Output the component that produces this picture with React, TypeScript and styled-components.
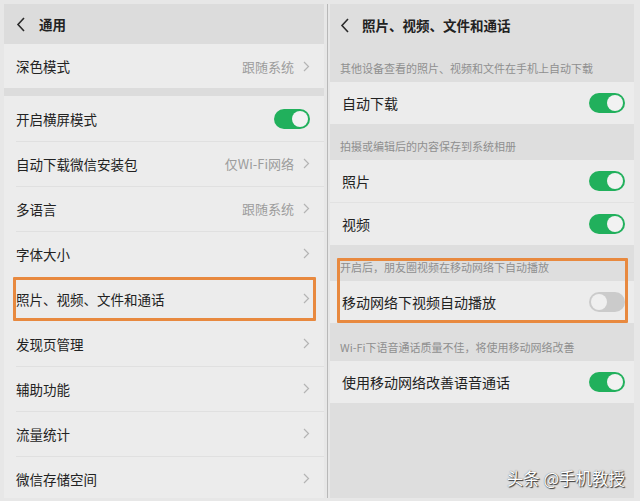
import styled, { createGlobalStyle } from 'styled-components';

const GlobalStyle = createGlobalStyle`
  html, body { margin: 0; padding: 0; }
  body {
    background: #e7e7e7;
    font-family: "Noto Sans CJK SC", "Noto Sans", sans-serif;
    color: #1f1f1f;
  }
`;

type LeftRow = { label: string; value?: string; toggle?: boolean; highlight?: boolean };

const leftRows: LeftRow[] = [
  { label: '开启横屏模式', toggle: true },
  { label: '自动下载微信安装包', value: '仅Wi-Fi网络' },
  { label: '多语言', value: '跟随系统' },
  { label: '字体大小' },
  { label: '照片、视频、文件和通话', highlight: true },
  { label: '发现页管理' },
  { label: '辅助功能' },
  { label: '流量统计' },
  { label: '微信存储空间' },
];

type Section = { note: string; tall?: boolean; highlight?: boolean; rows: { label: string; on: boolean }[] };

const sections: Section[] = [
  { note: '其他设备查看的照片、视频和文件在手机上自动下载', rows: [{ label: '自动下载', on: true }] },
  {
    note: '拍摄或编辑后的内容保存到系统相册',
    rows: [
      { label: '照片', on: true },
      { label: '视频', on: true },
    ],
  },
  { note: '开启后，朋友圈视频在移动网络下自动播放', highlight: true, rows: [{ label: '移动网络下视频自动播放', on: false }] },
  { note: 'Wi-Fi下语音通话质量不佳，将使用移动网络改善', tall: true, rows: [{ label: '使用移动网络改善语音通话', on: true }] },
];

const BackIcon = () => (
  <svg width="10" height="15" viewBox="0 0 10 15">
    <polyline points="8,1 2,7.5 8,14" fill="none" stroke="#2a2a2a" strokeWidth="1.6" />
  </svg>
);

const Chevron = () => (
  <svg width="7" height="11" viewBox="0 0 7 11">
    <polyline points="1,1 5.5,5.5 1,10" fill="none" stroke="#b4b4b4" strokeWidth="1.2" />
  </svg>
);

const Switch = ({ on }: { on: boolean }) => (
  <Styled.Track $on={on}>
    <Styled.Knob $on={on} />
  </Styled.Track>
);

export default function App() {
  return (
    <Styled.Page>
      <GlobalStyle />
      <Styled.LeftPanel>
        <Styled.Header>
          <BackIcon />
          <Styled.Title>通用</Styled.Title>
        </Styled.Header>
        <Styled.LeftRow $h={44}>
          <Styled.LeftLabel>深色模式</Styled.LeftLabel>
          <Styled.Value>跟随系统</Styled.Value>
          <Chevron />
        </Styled.LeftRow>
        <Styled.Gap />
        {leftRows.map(row => (
          <Styled.LeftRow key={row.label} $h={45} $line $highlight={row.highlight}>
            <Styled.LeftLabel>{row.label}</Styled.LeftLabel>
            {row.toggle ? (
              <Switch on />
            ) : (
              <>
                {row.value && <Styled.Value>{row.value}</Styled.Value>}
                <Chevron />
              </>
            )}
          </Styled.LeftRow>
        ))}
      </Styled.LeftPanel>
      <Styled.Seam />
      <Styled.RightPanel>
        <Styled.RightHeader>
          <BackIcon />
          <Styled.Title>照片、视频、文件和通话</Styled.Title>
        </Styled.RightHeader>
        {sections.map(sec => (
          <Styled.Group key={sec.note} $highlight={sec.highlight}>
            <Styled.Note $tall={sec.tall}>{sec.note}</Styled.Note>
            {sec.rows.map((row, j) => (
              <Styled.RightRow key={row.label} $line={j > 0}>
                <Styled.RightLabel>{row.label}</Styled.RightLabel>
                <Switch on={row.on} />
              </Styled.RightRow>
            ))}
          </Styled.Group>
        ))}
        <Styled.Watermark>头条 @手机教授</Styled.Watermark>
      </Styled.RightPanel>
    </Styled.Page>
  );
}

const Styled = {
  Page: styled.div`
    display: flex;
    height: 501px;
    box-sizing: border-box;
    padding: 4px 6px 3px 4px;
    overflow: hidden;
  `,
  LeftPanel: styled.div`
    width: 320px;
    flex: none;
    background: #dcdcdc;
    display: flex;
    flex-direction: column;
    overflow: hidden;
  `,
  Seam: styled.div`
    width: 1px;
    flex: none;
    margin: 0 2px 0 3px;
    background: #b8b8b8;
  `,
  RightPanel: styled.div`
    flex: 1;
    position: relative;
    background: #dedede;
    display: flex;
    flex-direction: column;
    overflow: hidden;
  `,
  Header: styled.div`
    height: 40px;
    flex: none;
    display: flex;
    align-items: center;
    padding-left: 12px;
    gap: 13px;
  `,
  RightHeader: styled.div`
    height: 42px;
    flex: none;
    display: flex;
    align-items: center;
    padding: 0 0 0 10px;
    box-sizing: border-box;
    gap: 12px;
  `,
  Title: styled.div`
    font-size: 13.5px;
    font-weight: 600;
    color: #222;
  `,
  Gap: styled.div`
    height: 8px;
    flex: none;
  `,
  LeftRow: styled.div<{ $h: number; $line?: boolean; $highlight?: boolean }>`
    position: relative;
    height: ${p => p.$h}px;
    flex: none;
    display: flex;
    align-items: center;
    padding: 0 14px 0 12px;
    background: #ececec;
    ${p =>
      p.$line &&
      `& + &::before {
        content: '';
        position: absolute;
        top: 0;
        left: 12px;
        right: 0;
        height: 1px;
        background: #e0e0e0;
      }`}
    ${p =>
      p.$highlight &&
      `&::after {
        content: '';
        position: absolute;
        top: 1px;
        bottom: 0;
        left: 9px;
        right: 8px;
        border: 3px solid #e8893f;
        border-radius: 1px;
      }`}
  `,
  LeftLabel: styled.div`
    flex: 1;
    font-size: 13.5px;
    color: #222;
  `,
  Value: styled.div`
    font-size: 13px;
    color: #9c9c9c;
    margin-right: 9px;
  `,
  Group: styled.div<{ $highlight?: boolean }>`
    position: relative;
    ${p =>
      p.$highlight &&
      `&::after {
        content: '';
        position: absolute;
        top: 13px;
        bottom: 0;
        left: 7px;
        right: 6px;
        border: 3px solid #e8893f;
        border-radius: 1px;
      }`}
  `,
  Note: styled.div<{ $tall?: boolean }>`
    height: ${p => (p.$tall ? 38 : 36)}px;
    box-sizing: border-box;
    display: flex;
    align-items: flex-end;
    padding: 0 0 6px 10px;
    font-size: 11px;
    color: #8f8f8f;
  `,
  RightRow: styled.div<{ $line?: boolean }>`
    height: 42px;
    display: flex;
    align-items: center;
    padding: 0 9px 0 12px;
    background: #ececec;
    ${p => p.$line && `border-top: 1px solid #e2e2e2;`}
  `,
  RightLabel: styled.div`
    flex: 1;
    font-size: 14px;
    color: #222;
  `,
  Track: styled.div<{ $on: boolean }>`
    width: 36px;
    height: 20px;
    border-radius: 10px;
    background: ${p => (p.$on ? '#21b05c' : '#cbcbcb')};
    display: flex;
    align-items: center;
    justify-content: ${p => (p.$on ? 'flex-end' : 'flex-start')};
    padding: 0 2px;
    box-sizing: border-box;
  `,
  Knob: styled.div<{ $on: boolean }>`
    width: 16px;
    height: 16px;
    border-radius: 50%;
    background: ${p => (p.$on ? '#f2f2f2' : '#efefef')};
  `,
  Watermark: styled.div`
    position: absolute;
    right: 9px;
    bottom: 8px;
    font-size: 16.5px;
    color: #fff;
    text-shadow: 1px 1px 1px #333, 0 0 1px #555;
  `,
};
